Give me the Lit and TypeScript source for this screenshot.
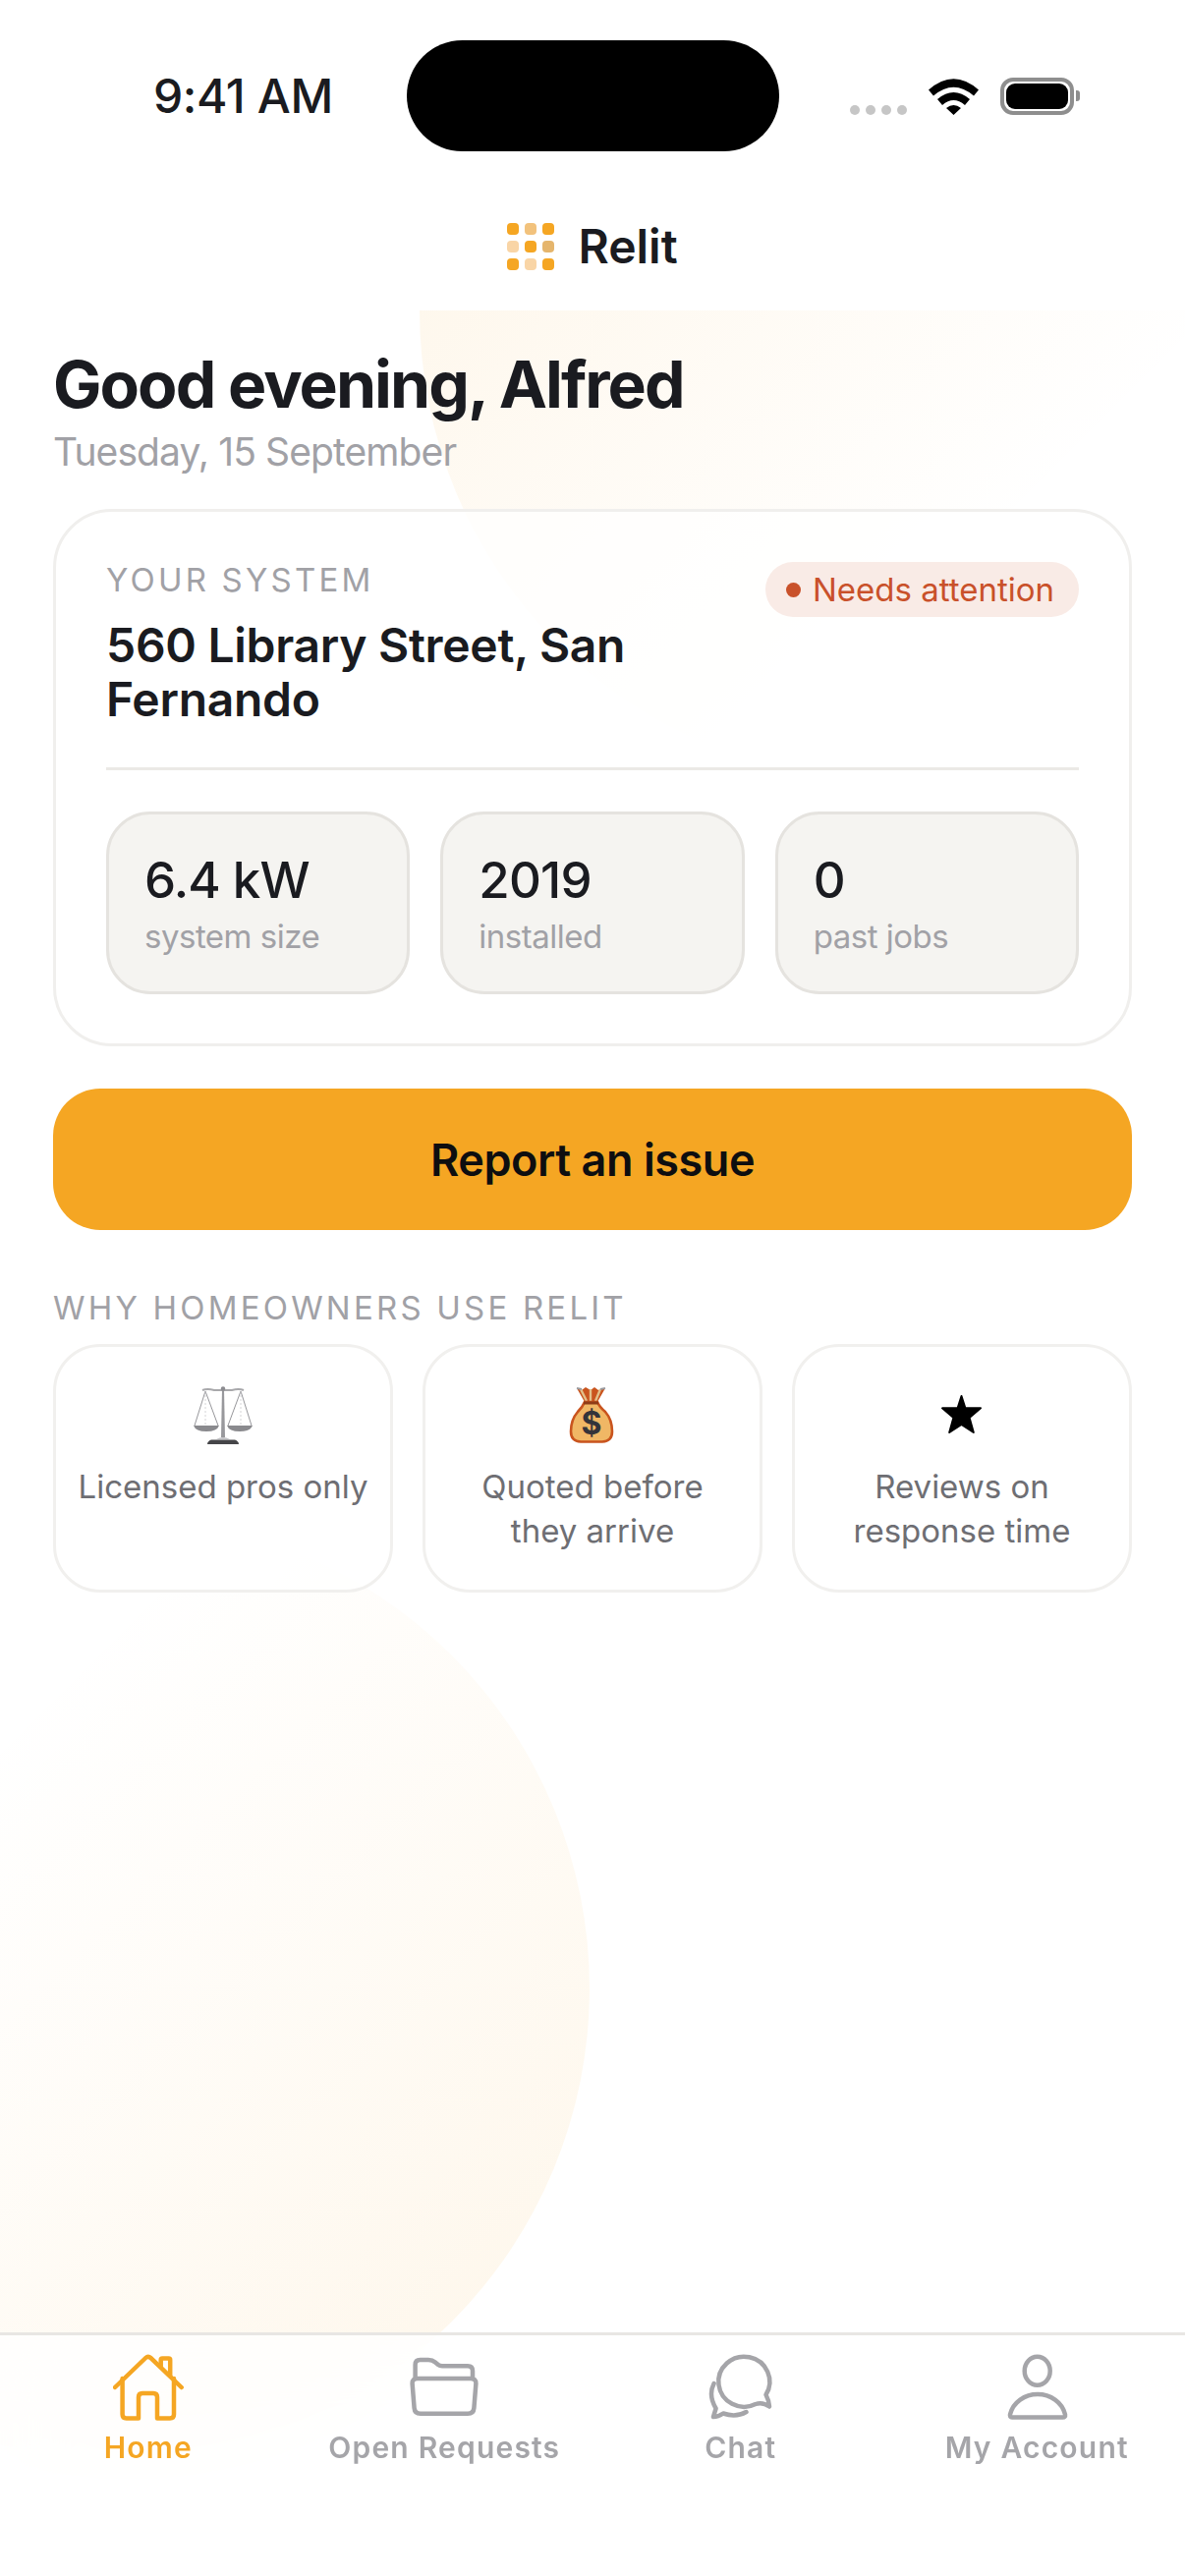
import { LitElement, css, html, svg } from 'lit';
import { customElement } from 'lit/decorators.js';

const stats = [
  { value: '6.4 kW', label: 'system size' },
  { value: '2019', label: 'installed' },
  { value: '0', label: 'past jobs' }
];

const scaleIcon = svg`
  <g fill="none" stroke="#8a8a8e" stroke-width="0.9">
    <path d="M30 8 L21 8 Q14 6 9 8 M30 8 L39 8 Q46 6 51 8" stroke-width="2" stroke="#a8a8ab" />
    <path d="M12 9 L1 44 M12 9 L25 44 M48 9 L35 44 M48 9 L59 44" />
    <path d="M12 9 V44 M48 9 V44" stroke="#cfcfd1" stroke-dasharray="2 2" />
  </g>
  <path d="M0 44 H26 Q24 50 13 50 Q2 50 0 44 Z M34 44 H60 Q58 50 47 50 Q36 50 34 44 Z" fill="#8a8a8e" />
  <path d="M29 7 H31 L32 56 H28 Z" fill="#98989c" />
  <circle cx="30" cy="6.5" r="2.2" fill="#8c8c90" />
  <path d="M23 58 Q30 54 37 58 Z" fill="#c2c2c5" />
  <path d="M18 58.5 H42 Q46 60 46 63 H14 Q14 60 18 58.5 Z" fill="#454548" />
`;

const bagIcon = svg`
  <path d="M14 6 L22 20 H35 L43 6 L36 8 L32 5 L28 8 L23 5 L19 8 Z" fill="#c9541e" />
  <path d="M18 7 L24 19 M28 7 V19 M38 7 L33 19" stroke="#e2c08a" stroke-width="2.4" fill="none" />
  <path d="M14 6 L19 7 M38 7 L43 6" stroke="#9b9b9f" stroke-width="2" fill="none" />
  <path d="M22 20 Q20 25 15 30 Q8 38 8 50 Q8 60 18 60.5 H40 Q50 60 50 50 Q50 38 43 30 Q37 25 35 20 Z" fill="#f0b765" stroke="#c9541e" stroke-width="2.6" />
  <path d="M21 21 H36" stroke="#8f3c17" stroke-width="3" />
  <text x="29" y="53" text-anchor="middle" class="dollar">$</text>
`;

const starIcon = svg`
  <path d="M29.5 14 L33.4 26.3 L49 26.3 L37.6 36 L41.8 51 L29.5 43 L17.2 51 L21.4 36 L10 26.3 L25.6 26.3 Z" fill="#000" stroke="#000" stroke-width="2" stroke-linejoin="round" />
`;

const reasons = [
  { icon: scaleIcon, text: 'Licensed pros only' },
  { icon: bagIcon, text: 'Quoted before they arrive' },
  { icon: starIcon, text: 'Reviews on response time' }
];

const navItems = [
  {
    label: 'Home',
    active: true,
    icon: svg`
      <path d="M2 36 L33.2 6 Q35.8 3.6 38.4 6 L69.7 36" />
      <path d="M9.6 27 V63.5 Q9.6 67.5 13.6 67.5 H26 V46 Q26 42 30 42 H41 Q45 42 45 46 V67.5 H58 Q62 67.5 62 63.5 V27" />
      <path d="M48.7 14.5 V8 Q48.7 6.5 50.2 6.5 H56.7 Q58.2 6.5 58.2 8 V24" />
    `
  },
  {
    label: 'Open Requests',
    active: false,
    icon: svg`
      <path d="M6.6 27 V13 Q6.6 8 11.6 8 H20 Q24 8 27 10.5 L30 13 Q31.5 14.2 34 14.2 H60 Q65 14.2 65 19.2 V27" />
      <path d="M9 27 H63 Q68.5 27 68.4 32 L66.4 57 Q66 62.7 60 62.7 H12 Q6 62.7 5.6 57 L3.6 32 Q3.5 27 9 27 Z" />
    `
  },
  {
    label: 'Chat',
    active: false,
    icon: svg`
      <path d="M61.5 43.5 A26 25.5 0 1 0 51 53 Q58 50.5 65 55.5 Q64.5 49 61.5 43.5 Z" />
      <path d="M8.6 32 Q2.5 44 10.6 57.5 L8 66 Q13 66 18 62.5 Q31 67 41.5 61" />
    `
  },
  {
    label: 'My Account',
    active: false,
    icon: svg`
      <ellipse cx="36.7" cy="19.3" rx="13" ry="14.5" />
      <path d="M11 66.5 H62.5 Q65.5 66.5 65 63.5 C62 51 50 43 37 43 C24 43 12 51 9 63.5 Q8.5 66.5 11 66.5 Z" />
    `
  }
];

@customElement('app-root')
export class AppRoot extends LitElement {
  static styles = css`
    :host {
      display: block;
      width: 1206px;
      height: 2622px;
      position: relative;
      overflow: hidden;
      background: #fff;
      font-family: Inter, 'Liberation Sans', sans-serif;
      color: #1a1b20;
    }

    .page {
      height: 100%;
      display: flex;
      flex-direction: column;
    }

    .status {
      display: grid;
      grid-template-columns: 414px 379px 413px;
      align-items: center;
      padding-top: 41px;
    }

    .time {
      padding-left: 156px;
      font-size: 48px;
      font-weight: 500;
      letter-spacing: -0.4px;
    }

    .island {
      height: 113px;
      border-radius: 57px;
      background: #000;
    }

    .status-icons {
      display: flex;
      align-items: flex-end;
      gap: 22px;
      padding-left: 72px;
    }

    .signal {
      display: flex;
      gap: 6px;
    }

    .signal span {
      width: 10px;
      height: 10px;
      border-radius: 50%;
      background: #c6c6c6;
    }

    .wifi {
      display: block;
      width: 51px;
      height: 37px;
    }

    .battery {
      display: flex;
      align-items: center;
      gap: 2px;
    }

    .battery-body {
      width: 75px;
      height: 38px;
      box-sizing: border-box;
      padding: 2px;
      border: 4px solid #8e8e8e;
      border-radius: 13px;
    }

    .battery-fill {
      height: 100%;
      border-radius: 9px;
      background: #000;
    }

    .battery-cap {
      width: 4px;
      height: 11px;
      border-radius: 0 3px 3px 0;
      background: #8e8e8e;
    }

    .brand {
      display: flex;
      justify-content: center;
      align-items: center;
      gap: 24px;
      padding: 73px 0 41px;
      font-size: 48px;
      line-height: 48px;
      font-weight: 600;
    }

    .logo {
      display: grid;
      grid-template-columns: repeat(3, 12px);
      gap: 6px;
    }

    .logo span {
      height: 12px;
      border-radius: 4px;
      background: #f5a623;
    }

    .logo .soft {
      background: #f9d5a6;
    }

    .logo .mid {
      background: #f2c27c;
    }

    .logo .muted {
      background: #e5b56c;
    }

    .main {
      flex: 1;
      position: relative;
      overflow: hidden;
      padding: 36px 54px 0;
    }

    .blob {
      position: absolute;
      width: 960px;
      height: 960px;
      border-radius: 50%;
    }

    .blob.top {
      top: -480px;
      left: 427px;
      background: linear-gradient(135deg, rgba(245, 166, 35, 0.13), rgba(245, 166, 35, 0) 68%);
    }

    .blob.bottom {
      top: 1228px;
      left: -360px;
      background: linear-gradient(315deg, rgba(245, 166, 35, 0.1), rgba(245, 166, 35, 0) 70%);
    }

    .content {
      position: relative;
    }

    h1 {
      margin: 0;
      font-size: 66px;
      line-height: 79px;
      font-weight: 700;
      letter-spacing: -1.95px;
    }

    .date {
      margin-top: 5px;
      font-size: 39px;
      line-height: 47px;
      letter-spacing: -0.9px;
      color: #a1a1a6;
    }

    .card {
      margin-top: 35px;
      padding: 51px 51px 50px;
      border: 3px solid #f0efed;
      border-radius: 60px;
      background: rgba(255, 255, 255, 0.72);
    }

    .card-head {
      display: flex;
      justify-content: space-between;
      align-items: flex-start;
      padding-bottom: 42px;
      border-bottom: 3px solid #ebe9e6;
    }

    .eyebrow {
      font-size: 33px;
      line-height: 36px;
      letter-spacing: 3.2px;
      color: #a1a1a6;
    }

    .address {
      width: 620px;
      margin-top: 21px;
      font-size: 48px;
      line-height: 55px;
      font-weight: 600;
      letter-spacing: -0.3px;
    }

    .badge {
      display: flex;
      align-items: center;
      gap: 12px;
      height: 56px;
      padding: 0 25px 0 21px;
      border-radius: 28px;
      background: #f9ebe6;
      color: #c9512a;
      font-size: 33px;
      font-weight: 400;
    }

    .badge i {
      width: 15px;
      height: 15px;
      border-radius: 50%;
      background: #c9512a;
    }

    .stats {
      display: grid;
      grid-template-columns: repeat(3, 1fr);
      gap: 31px;
      margin-top: 42px;
    }

    .stat {
      padding: 36px;
      border: 3px solid #e5e3df;
      border-radius: 45px;
      background: #f5f4f1;
    }

    .stat-value {
      font-size: 51px;
      line-height: 61px;
      font-weight: 500;
      letter-spacing: -0.8px;
    }

    .stat-label {
      margin-top: 7px;
      font-size: 33px;
      line-height: 40px;
      letter-spacing: -0.5px;
      color: #a1a1a6;
    }

    .cta {
      display: block;
      width: 100%;
      height: 144px;
      margin-top: 43px;
      border: 0;
      border-radius: 48px;
      background: #f5a623;
      color: #0e0e10;
      font: 600 45px Inter, 'Liberation Sans', sans-serif;
      letter-spacing: -0.45px;
    }

    .section-label {
      margin-top: 59px;
      line-height: 40px;
    }

    .reasons {
      display: grid;
      grid-template-columns: repeat(3, 1fr);
      gap: 30px;
      margin-top: 17px;
    }

    .reason {
      height: 253px;
      box-sizing: border-box;
      padding: 36px 21px 0;
      border: 3px solid #f1f0ee;
      border-radius: 48px;
      background: rgba(255, 255, 255, 0.72);
      text-align: center;
      font-size: 33px;
      line-height: 45px;
      color: #6e6e73;
    }

    .reason svg {
      display: block;
      width: 60px;
      height: 66px;
      margin: 0 auto 18px;
    }

    .dollar {
      font: 700 32px Inter, sans-serif;
      fill: #34343a;
    }

    nav {
      position: absolute;
      left: 0;
      right: 0;
      bottom: 0;
      height: 248px;
      box-sizing: border-box;
      display: grid;
      grid-template-columns: repeat(4, 1fr);
      align-items: start;
      padding-top: 17px;
      border-top: 3px solid #e8e6e3;
      background: rgba(255, 255, 255, 0.8);
      backdrop-filter: blur(30px);
    }

    .tab {
      display: flex;
      flex-direction: column;
      align-items: center;
      gap: 7px;
      color: #a5a5a9;
      font-size: 30px;
      line-height: 36px;
      font-weight: 600;
      letter-spacing: 1.2px;
    }

    .tab.active {
      color: #f5a623;
    }

    .tab svg {
      display: block;
      width: 72px;
      height: 72px;
      fill: none;
      stroke: currentColor;
      stroke-width: 4.5;
      stroke-linecap: round;
      stroke-linejoin: round;
    }
  `;

  renderStatus() {
    return html`
      <div class="status">
        <div class="time">9:41 AM</div>
        <div class="island"></div>
        <div class="status-icons">
          <div class="signal"><span></span><span></span><span></span><span></span></div>
          <svg class="wifi" viewBox="0 0 51 37">
            <path d="M0 11.5 Q25.5 -11 51 11.5 L46 17.5 Q25.5 0 5 17.5 Z M9 21 Q25.5 7 42 21 L37 27 Q25.5 17 14 27 Z M18 30 Q25.5 24 33 30 L25.5 37 Z" />
          </svg>
          <div class="battery">
            <div class="battery-body"><div class="battery-fill"></div></div>
            <div class="battery-cap"></div>
          </div>
        </div>
      </div>
    `;
  }

  render() {
    const logoCells = ['', 'mid', '', 'soft', '', 'muted', '', 'soft', ''];
    return html`
      <div class="page">
        ${this.renderStatus()}
        <header class="brand">
          <div class="logo">${logoCells.map((c) => html`<span class=${c}></span>`)}</div>
          <span>Relit</span>
        </header>
        <main class="main">
          <div class="blob top"></div>
          <div class="blob bottom"></div>
          <div class="content">
            <h1>Good evening, Alfred</h1>
            <div class="date">Tuesday, 15 September</div>
            <section class="card">
              <div class="card-head">
                <div>
                  <div class="eyebrow">YOUR SYSTEM</div>
                  <div class="address">560 Library Street, San Fernando</div>
                </div>
                <div class="badge"><i></i>Needs attention</div>
              </div>
              <div class="stats">
                ${stats.map(
                  (s) => html`
                    <div class="stat">
                      <div class="stat-value">${s.value}</div>
                      <div class="stat-label">${s.label}</div>
                    </div>
                  `
                )}
              </div>
            </section>
            <button class="cta">Report an issue</button>
            <div class="eyebrow section-label">WHY HOMEOWNERS USE RELIT</div>
            <div class="reasons">
              ${reasons.map(
                (r) => html`
                  <div class="reason">
                    <svg viewBox="0 0 60 66">${r.icon}</svg>
                    ${r.text}
                  </div>
                `
              )}
            </div>
          </div>
        </main>
      </div>
      <nav>
        ${navItems.map(
          (item) => html`
            <div class="tab ${item.active ? 'active' : ''}">
              <svg viewBox="0 0 72 72">${item.icon}</svg>
              <span>${item.label}</span>
            </div>
          `
        )}
      </nav>
    `;
  }
}
